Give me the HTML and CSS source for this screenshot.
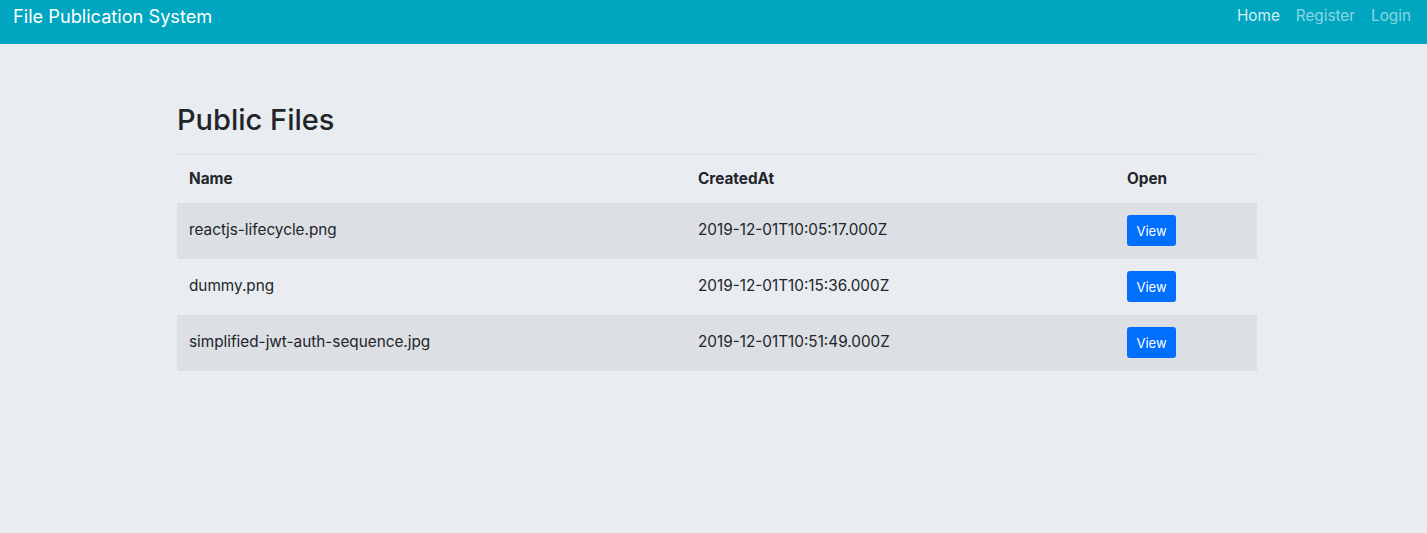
FILE: index.html
```html
<!DOCTYPE html>
<html>
<head>
<meta charset="utf-8">
<link rel="stylesheet" href="styles.css">
</head>
<body>
<nav class="navbar">
  <a class="brand">File Publication System</a>
  <ul class="nav">
    <li><a class="nav-link active">Home</a></li>
    <li><a class="nav-link">Register</a></li>
    <li><a class="nav-link">Login</a></li>
  </ul>
</nav>
<main class="container">
  <h2 class="title">Public Files</h2>
  <table class="files">
    <thead>
      <tr><th class="c-name">Name</th><th class="c-date">CreatedAt</th><th class="c-open">Open</th></tr>
    </thead>
    <tbody>
      <tr><td>reactjs-lifecycle.png</td><td>2019-12-01T10:05:17.000Z</td><td><button class="btn">View</button></td></tr>
      <tr><td>dummy.png</td><td>2019-12-01T10:15:36.000Z</td><td><button class="btn">View</button></td></tr>
      <tr><td>simplified-jwt-auth-sequence.jpg</td><td>2019-12-01T10:51:49.000Z</td><td><button class="btn">View</button></td></tr>
    </tbody>
  </table>
</main>
</body>
</html>
```
FILE: styles.css
```css
html, body {
  margin: 0;
  padding: 0;
}
body {
  background: #e9ecf1;
  font-family: Inter, "Liberation Sans", sans-serif;
  color: #212529;
  font-size: 16px;
  line-height: 1.5;
  height: 533px;
}
.navbar {
  background: #00a6c0;
  height: 44px;
  display: flex;
  align-items: center;
  justify-content: space-between;
  padding: 0 8px 0 13px;
  box-sizing: border-box;
}
.brand {
  color: #fff;
  font-size: 18.2px;
  line-height: 1;
  margin-top: -12px;
}
.nav {
  list-style: none;
  display: flex;
  margin: 0;
  padding: 0;
  margin-top: -12px;
}
.nav-link {
  display: block;
  padding: 0 8px;
  color: rgba(255,255,255,0.55);
  font-size: 15.3px;
}
.nav-link.active {
  color: rgba(255,255,255,0.85);
}
.container {
  width: 1080px;
  margin-left: 177px;
  padding-top: 59px;
}
.title {
  font-size: 29px;
  font-weight: 500;
  line-height: 1.2;
  margin: 0 0 16px 0;
}
.files {
  width: 100%;
  border-collapse: collapse;
  border-top: 1px solid #dcdfe3;
}
.files th, .files td {
  text-align: left;
  padding: 12px;
  font-size: 15.3px;
}
.files th {
  font-weight: 700;
  padding-top: 13px;
  padding-bottom: 12px;
}
.c-name { width: 485px; }
.c-date { width: 405px; }
.files tbody tr:nth-child(odd) {
  background: #dcdfe4;
}
.files td {
  height: 32px;
  padding-top: 12px;
  padding-bottom: 12px;
  vertical-align: middle;
}
.btn {
  background: #006ffd;
  color: #fff;
  border: none;
  border-radius: 3px;
  font-family: inherit;
  font-size: 13px;
  padding: 0 8px;
  height: 31px;
  width: 49px;
  cursor: pointer;
}
```
